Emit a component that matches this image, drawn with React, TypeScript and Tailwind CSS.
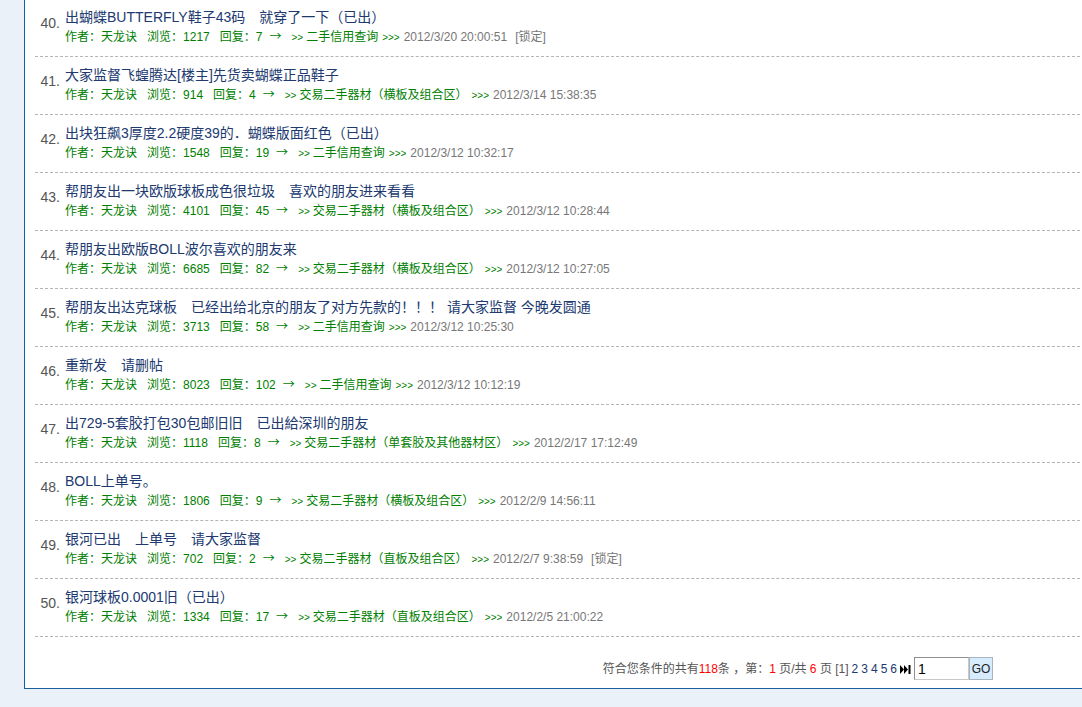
import React from "react";

interface Topic {
  no: number;
  title: string;
  views: number;
  replies: number;
  board: string;
  date: string;
  locked?: boolean;
}

const topics: Topic[] = [
  { no: 40, title: "出蝴蝶BUTTERFLY鞋子43码　就穿了一下（已出）", views: 1217, replies: 7, board: "二手信用查询", date: "2012/3/20 20:00:51", locked: true },
  { no: 41, title: "大家监督飞蝗腾达[楼主]先货卖蝴蝶正品鞋子", views: 914, replies: 4, board: "交易二手器材（横板及组合区）", date: "2012/3/14 15:38:35" },
  { no: 42, title: "出块狂飙3厚度2.2硬度39的．蝴蝶版面红色（已出）", views: 1548, replies: 19, board: "二手信用查询", date: "2012/3/12 10:32:17" },
  { no: 43, title: "帮朋友出一块欧版球板成色很垃圾　喜欢的朋友进来看看", views: 4101, replies: 45, board: "交易二手器材（横板及组合区）", date: "2012/3/12 10:28:44" },
  { no: 44, title: "帮朋友出欧版BOLL波尔喜欢的朋友来", views: 6685, replies: 82, board: "交易二手器材（横板及组合区）", date: "2012/3/12 10:27:05" },
  { no: 45, title: "帮朋友出达克球板　已经出给北京的朋友了对方先款的！！！ 请大家监督 今晚发圆通", views: 3713, replies: 58, board: "二手信用查询", date: "2012/3/12 10:25:30" },
  { no: 46, title: "重新发　请删帖", views: 8023, replies: 102, board: "二手信用查询", date: "2012/3/12 10:12:19" },
  { no: 47, title: "出729-5套胶打包30包邮旧旧　已出給深圳的朋友", views: 1118, replies: 8, board: "交易二手器材（单套胶及其他器材区）", date: "2012/2/17 17:12:49" },
  { no: 48, title: "BOLL上单号。", views: 1806, replies: 9, board: "交易二手器材（横板及组合区）", date: "2012/2/9 14:56:11" },
  { no: 49, title: "银河已出　上单号　请大家监督", views: 702, replies: 2, board: "交易二手器材（直板及组合区）", date: "2012/2/7 9:38:59", locked: true },
  { no: 50, title: "银河球板0.0001旧（已出）", views: 1334, replies: 17, board: "交易二手器材（直板及组合区）", date: "2012/2/5 21:00:22" },
];

const font = "font-['Liberation_Sans','Noto_Sans_CJK_SC',sans-serif]";

function TopicRow({ t }: { t: Topic }) {
  return (
    <li className="flex pt-[8px] pb-[11px] border-b border-dashed border-[#b4b4b4]">
      <div className="w-[25px] shrink-0 text-right text-[14px] leading-[20px] mt-[6px] text-[#555]">
        {t.no}.
      </div>
      <div className="ml-[5px] min-w-0">
        <div className="h-[20px] leading-[20px] text-[14px] text-[#20396f] whitespace-nowrap">
          {t.title}
        </div>
        <div className="h-[18px] leading-[18px] text-[12px] text-[#008000] whitespace-nowrap">
          <span>作者：天龙诀</span>
          <span className="ml-[10px]">浏览：{t.views}</span>
          <span className="ml-[10px]">回复：{t.replies}</span>
          <span className="ml-[7px] font-['Noto_Sans_CJK_SC',sans-serif]">→</span>
          <span className="ml-[10px] text-[10px]">&gt;&gt;</span>
          <span className="ml-[3px]">{t.board}</span>
          <span className="ml-[4px] text-[10px]">&gt;&gt;&gt;</span>
          <span className="ml-[4px] text-[#777]">{t.date}</span>
          {t.locked && <span className="ml-[8px] text-[#777]">[锁定]</span>}
        </div>
      </div>
    </li>
  );
}

export default function App() {
  return (
    <div className={`w-full h-[707px] overflow-hidden bg-[#eaf1f8] ${font}`}>
      <div className="ml-[24px] w-[1076px] bg-white border-l border-b border-[#19609f]">
        <ul className="ml-[10px] mt-[-1px]">
          {topics.map((t) => (
            <TopicRow key={t.no} t={t} />
          ))}
        </ul>

        {/* Pager */}
        <div className="flex justify-end items-center pr-[107px] pt-[20px] pb-[8px] text-[12px] text-[#555] whitespace-pre">
          <span>符合您条件的共有</span>
          <span className="text-[#f00]">118</span>
          <span>条 ，第：</span>
          <span className="text-[#f00]">1</span>
          <span> 页/共 </span>
          <span className="text-[#f00]">6</span>
          <span> 页 [1]</span>
          {[2, 3, 4, 5, 6].map((n) => (
            <span key={n} className="ml-[3px] text-[#20396f]">
              {n}
            </span>
          ))}
          <svg width="11" height="9" viewBox="0 0 11 9" className="ml-[3px] mt-[2px]">
            <path d="M0 0 L4 4.5 L0 9 Z M4 0 L8 4.5 L4 9 Z" fill="#000" />
            <rect x="8.5" y="0" width="2" height="9" fill="#000" />
          </svg>
          <input
            defaultValue="1"
            className="ml-[3px] w-[55px] h-[23px] px-[3px] text-[14px] text-black border border-[#8f8f8f] border-b-[#c8c8c8] border-r-[#c8c8c8] outline-none"
          />
          <button className="w-[24px] h-[23px] bg-[#d6ebfb] border border-[#a9b4be] text-[12px] text-[#222] leading-none">
            GO
          </button>
        </div>
      </div>
    </div>
  );
}
